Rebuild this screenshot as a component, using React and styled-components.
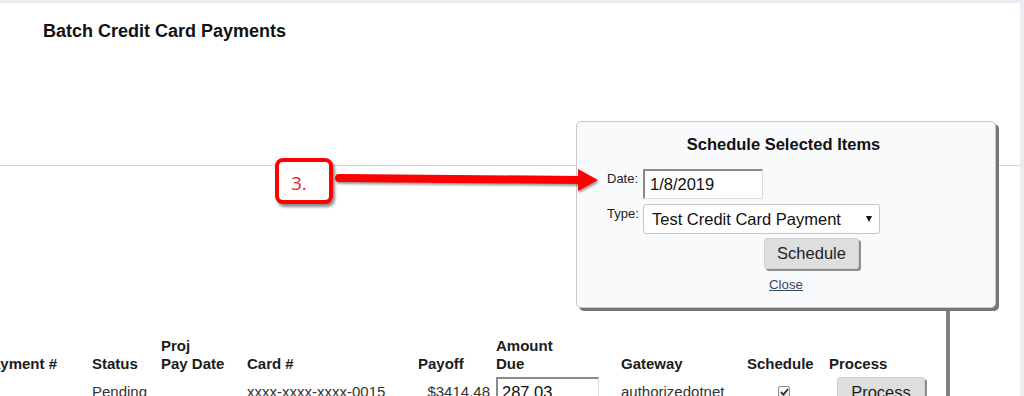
import React from 'react';
import styled, { createGlobalStyle } from 'styled-components';

const GlobalStyle = createGlobalStyle`
  html, body { margin: 0; padding: 0; }
  body {
    background: #e9ecf0;
    font-family: "Liberation Sans", Arial, sans-serif;
    overflow: hidden;
  }
  * { box-sizing: border-box; }
`;

const Viewport = styled.div`
  width: 1024px;
  height: 396px;
  padding-top: 3px;
  background: #e9ecf0;
  overflow: hidden;
`;

const Page = styled.main`
  position: relative;
  width: 1020px;
  height: 393px;
  background: #ffffff;
  overflow: hidden;
`;

const Title = styled.h1`
  margin: 0;
  padding: 18px 0 0 43px;
  font-size: 18px;
  line-height: 21px;
  font-weight: bold;
  color: #111;
`;

const Divider = styled.hr`
  margin: 123px 0 0;
  height: 0;
  border: 0;
  border-top: 1px solid #d4d4d4;
`;

const cols = '110px 69px 86px 171px 78px 125px 126px 82px 120px';

const HeaderRow = styled.div`
  display: grid;
  grid-template-columns: ${cols};
  align-items: end;
  margin: 171px 0 0 -18px;
`;

const HeaderCell = styled.div`
  font-size: 15px;
  line-height: 18px;
  font-weight: bold;
  color: #1c1c1c;
`;

const DataRow = styled.div`
  display: grid;
  grid-template-columns: ${cols};
  align-items: center;
  height: 32px;
  margin: 3px 0 0 -18px;
`;

const Cell = styled.div`
  font-size: 15px;
  line-height: 18px;
  color: #333;
  text-align: ${(p) => (p.$right ? 'right' : 'left')};
  padding-right: ${(p) => (p.$right ? '6px' : '0')};
`;

const TextInput = styled.input`
  display: block;
  width: ${(p) => p.$w}px;
  height: 30px;
  padding: 0 0 0 ${(p) => p.$pad}px;
  font-family: "Liberation Sans", Arial, sans-serif;
  font-size: 16.5px;
  color: #111;
  background: #fff;
  border-style: solid;
  border-width: 2px 1px 1px 2px;
  border-color: #8a8a8a #dcdcdc #dcdcdc #8a8a8a;
  border-radius: 1px;
  outline: none;
`;

const GreyButton = styled.button`
  display: block;
  width: ${(p) => p.$w}px;
  height: ${(p) => p.$h}px;
  margin-left: ${(p) => p.$ml || 0}px;
  padding: 0;
  font-family: "Liberation Sans", Arial, sans-serif;
  font-size: 16.5px;
  color: #1e1e1e;
  background: #dedede;
  border: 1px solid #d0d0d0;
  border-radius: 3px;
  box-shadow: 2px 2px 0 #8d8d8d;
`;

const CheckBox = styled.span`
  display: flex;
  align-items: center;
  justify-content: center;
  width: 12px;
  height: 12px;
  margin-left: 31px;
  border: 1px solid #8f8f8f;
  border-radius: 2px;
  background: linear-gradient(#fdfdfd, #e4e4e4);
`;

const Dialog = styled.section`
  position: absolute;
  left: 576px;
  top: 118px;
  width: 420px;
  height: 187px;
  padding-top: 12px;
  background: #f9fafc;
  border: 1px solid #c9c9c9;
  border-radius: 5px;
  box-shadow: 3px 3px 0 #767676;
  z-index: 2;
`;

const DialogTitle = styled.h2`
  margin: 0;
  text-align: center;
  font-size: 16.5px;
  line-height: 20px;
  font-weight: bold;
  color: #111;
  padding-right: 5px;
`;

const Form = styled.div`
  display: flex;
  flex-direction: column;
  gap: 5px;
  margin-top: 15px;
  padding-left: 30px;
`;

const FieldRow = styled.div`
  display: flex;
  align-items: flex-start;
`;

const Label = styled.label`
  width: 36px;
  padding-top: 2px;
  font-size: 13px;
  line-height: 15px;
  color: #222;
`;

const SelectWrap = styled.div`
  position: relative;
  width: 237px;
  height: 30px;
  &::after {
    content: '';
    position: absolute;
    right: 8px;
    top: 12px;
    border-left: 3.5px solid transparent;
    border-right: 3.5px solid transparent;
    border-top: 6px solid #111;
    pointer-events: none;
  }
`;

const Select = styled.select`
  appearance: none;
  width: 100%;
  height: 100%;
  padding: 0 0 0 8px;
  font-family: "Liberation Sans", Arial, sans-serif;
  font-size: 16.5px;
  color: #111;
  background: #fff;
  border: 1px solid #c5c5c5;
  border-radius: 3px;
  outline: none;
`;

const ButtonRow = styled.div`
  display: flex;
  margin-top: -1px;
  padding-left: 157px;
`;

const CloseLink = styled.a`
  display: block;
  margin-top: 8px;
  text-align: center;
  font-size: 13.3px;
  line-height: 16px;
  color: #34495f;
  text-decoration: underline;
`;

const Connector = styled.div`
  position: absolute;
  left: 946px;
  top: 306px;
  width: 4px;
  height: 90px;
  background: #808080;
  z-index: 1;
`;

const Callout = styled.div`
  position: absolute;
  left: 275px;
  top: 155px;
  width: 58px;
  height: 46px;
  padding: 4px 0 0 12px;
  display: flex;
  align-items: center;
  background: #fff;
  border: 4px solid #f00;
  border-radius: 8px;
  box-shadow: 2px 3px 3px rgba(0, 0, 0, 0.45);
  font-family: "Open Sans", "Liberation Sans", sans-serif;
  font-size: 19px;
  color: #e5241f;
  z-index: 3;
`;

const ArrowSvg = styled.svg`
  position: absolute;
  left: 330px;
  top: 157px;
  filter: drop-shadow(1px 2px 1px rgba(0, 0, 0, 0.4));
  z-index: 3;
`;

export default function App() {
  return (
    <>
      <GlobalStyle />
      <Viewport>
        <Page>
          <Title>Batch Credit Card Payments</Title>
          <Divider />
          <HeaderRow>
            <HeaderCell>Payment #</HeaderCell>
            <HeaderCell>Status</HeaderCell>
            <HeaderCell>Proj<br />Pay Date</HeaderCell>
            <HeaderCell>Card #</HeaderCell>
            <HeaderCell>Payoff</HeaderCell>
            <HeaderCell>Amount<br />Due</HeaderCell>
            <HeaderCell>Gateway</HeaderCell>
            <HeaderCell>Schedule</HeaderCell>
            <HeaderCell>Process</HeaderCell>
          </HeaderRow>
          <DataRow>
            <Cell />
            <Cell>Pending</Cell>
            <Cell />
            <Cell>xxxx-xxxx-xxxx-0015</Cell>
            <Cell $right>$3414.48</Cell>
            <Cell>
              <TextInput $w={103} $pad={4} value="287.03" readOnly />
            </Cell>
            <Cell>authorizedotnet</Cell>
            <Cell>
              <CheckBox>
                <svg width="9" height="8" viewBox="0 0 9 8">
                  <path d="M1 4.2 L3.4 6.6 L8 1" fill="none" stroke="#2b2b2b" strokeWidth="1.8" />
                </svg>
              </CheckBox>
            </Cell>
            <Cell>
              <GreyButton $w={88} $h={30} $ml={8}>Process</GreyButton>
            </Cell>
          </DataRow>

          <Connector />
          <Dialog>
            <DialogTitle>Schedule Selected Items</DialogTitle>
            <Form>
              <FieldRow>
                <Label>Date:</Label>
                <TextInput $w={120} $pad={5} value="1/8/2019" readOnly />
              </FieldRow>
              <FieldRow>
                <Label>Type:</Label>
                <SelectWrap>
                  <Select defaultValue="test">
                    <option value="test">Test Credit Card Payment</option>
                  </Select>
                </SelectWrap>
              </FieldRow>
              <ButtonRow>
                <GreyButton $w={95} $h={31}>Schedule</GreyButton>
              </ButtonRow>
            </Form>
            <CloseLink href="#">Close</CloseLink>
          </Dialog>

          <Callout>3.</Callout>
          <ArrowSvg width="275" height="40" viewBox="0 0 275 40">
            <line x1="9" y1="18" x2="252" y2="20" stroke="#f00" strokeWidth="8" strokeLinecap="round" />
            <polygon points="248,9 268,20 248,31" fill="#f00" />
          </ArrowSvg>
        </Page>
      </Viewport>
    </>
  );
}
